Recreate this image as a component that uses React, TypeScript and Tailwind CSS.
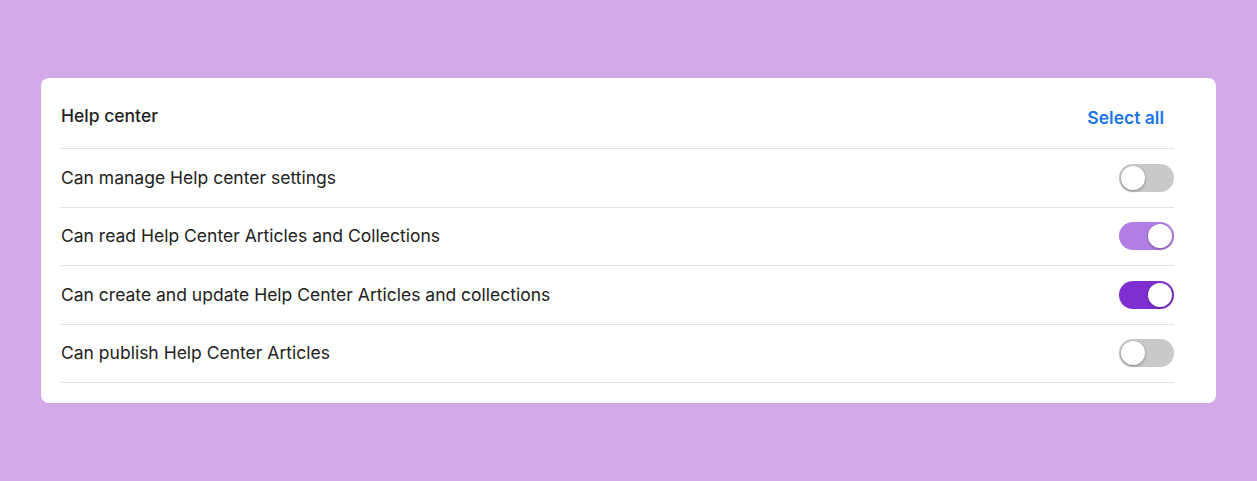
import { useState } from 'react'

const PERMISSIONS = [
  { id: 1, label: 'Can manage Help center settings', state: 'off' },
  { id: 2, label: 'Can read Help Center Articles and Collections', state: 'light' },
  { id: 3, label: 'Can create and update Help Center Articles and collections', state: 'on' },
  { id: 4, label: 'Can publish Help Center Articles', state: 'off' },
]

function Toggle({ state }: { state: string }) {
  const track =
    state === 'on' ? 'bg-[#7f2fd1]' : state === 'light' ? 'bg-[#b27ee3]' : 'bg-[#c9c9c9]'
  const knob = state === 'off' ? 'justify-start' : 'justify-end'
  return (
    <div className={`w-[55px] h-[28px] rounded-full flex items-center px-[2px] ${track} ${knob}`}>
      <span className="w-[24px] h-[24px] rounded-full bg-white shadow-[0_1px_3px_rgba(0,0,0,0.35)]" />
    </div>
  )
}

export default function App() {
  const [items] = useState(PERMISSIONS)

  return (
    <div className="min-h-[481px] bg-[#d4a9e7] px-[41px] pt-[78px] font-['Inter',sans-serif]">
      <div className="bg-white rounded-lg pl-5 pr-[42px] pb-[20px]">
        {/* Header */}
        <div className="flex items-center justify-between pt-[26px] pb-5 border-b border-[#e3e3e3]">
          <span className="text-[17.5px] leading-6 font-medium text-[#1f1f1f]">Help center</span>
          <button className="mr-[10px] translate-y-[2px] text-[17.5px] leading-6 font-semibold text-[#1b74e9]">
            Select all
          </button>
        </div>

        {/* Rows */}
        {items.map((item) => (
          <div
            key={item.id}
            className="h-[58.5px] flex items-center justify-between border-b border-[#e3e3e3]"
          >
            <span className="text-[17.5px] text-[#222222]">{item.label}</span>
            <Toggle state={item.state} />
          </div>
        ))}
      </div>
    </div>
  )
}
